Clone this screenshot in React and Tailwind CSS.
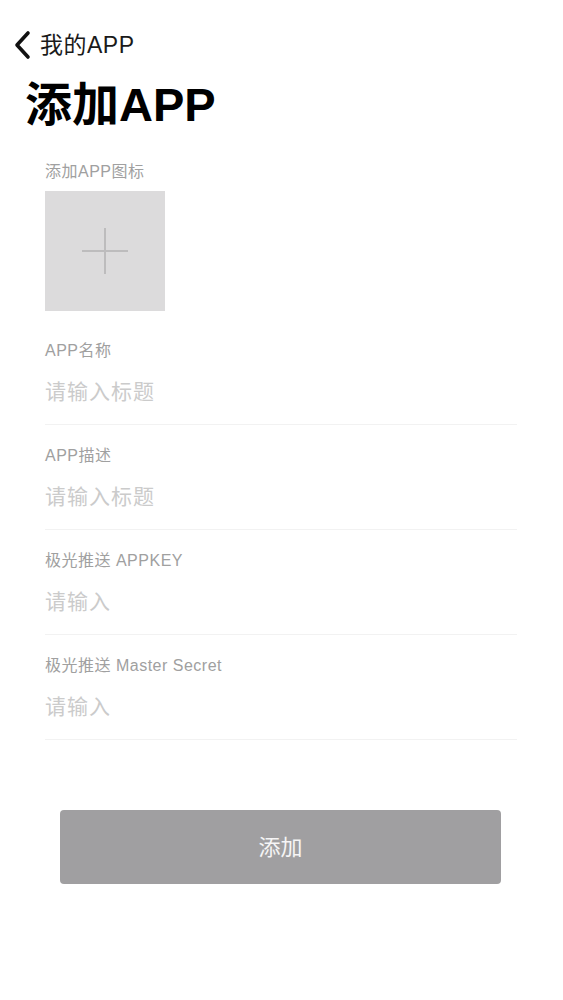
import React from "react";

const fields = [
  { label: "APP名称", placeholder: "请输入标题" },
  { label: "APP描述", placeholder: "请输入标题" },
  { label: "极光推送 APPKEY", placeholder: "请输入" },
  { label: "极光推送 Master Secret", placeholder: "请输入" },
];

function Field({ label, placeholder, first }) {
  return (
    <div className={first ? "mt-[30px]" : "mt-[21px]"}>
      <div className="text-[16px] leading-[20px] tracking-[0.5px] text-[#a0a0a0]">{label}</div>
      <div className="mt-[17px] text-[21px] leading-[28px] tracking-[1px] text-[#cbcbcb]">{placeholder}</div>
      <div className="mt-[18px] h-px bg-[#f2f2f2]" />
    </div>
  );
}

export default function App() {
  return (
    <div
      className="min-h-screen bg-white"
      style={{ fontFamily: '"Liberation Sans", "Noto Sans CJK SC", sans-serif' }}
    >
      {/* back bar */}
      <div className="flex items-center pl-[13px] pt-[29px] h-[60px]">
        <svg width="18" height="30" viewBox="0 0 18 30" fill="none">
          <polyline
            points="15,3 4,15 15,27"
            stroke="#111"
            strokeWidth="3.6"
            strokeLinecap="round"
            strokeLinejoin="round"
          />
        </svg>
        <span className="ml-[9px] text-[23px] leading-[30px] tracking-[0.5px] text-[#1a1a1a]">我的APP</span>
      </div>

      {/* title */}
      <h1 className="mt-[18px] pl-[25px] text-[47px] leading-[54px] font-bold text-black">添加APP</h1>

      {/* form */}
      <div className="pl-[45px] pr-[46px] mt-[30px]">
        <div className="text-[16px] leading-[20px] tracking-[0.5px] text-[#a0a0a0]">添加APP图标</div>
        <div className="mt-[9px] w-[120px] h-[120px] bg-[#dcdbdc] flex items-center justify-center">
          <svg width="46" height="46" viewBox="0 0 46 46">
            <line x1="0" y1="23" x2="46" y2="23" stroke="#bdbcbd" strokeWidth="2" />
            <line x1="23" y1="0" x2="23" y2="46" stroke="#bdbcbd" strokeWidth="2" />
          </svg>
        </div>

        {fields.map((f, i) => (
          <Field key={f.label} label={f.label} placeholder={f.placeholder} first={i === 0} />
        ))}
      </div>

      {/* submit */}
      <div className="pl-[60px] mt-[70px]">
        <button className="w-[441px] h-[74px] rounded-[4px] bg-[#a09fa1] text-[22px] text-white/90">
          添加
        </button>
      </div>
    </div>
  );
}
